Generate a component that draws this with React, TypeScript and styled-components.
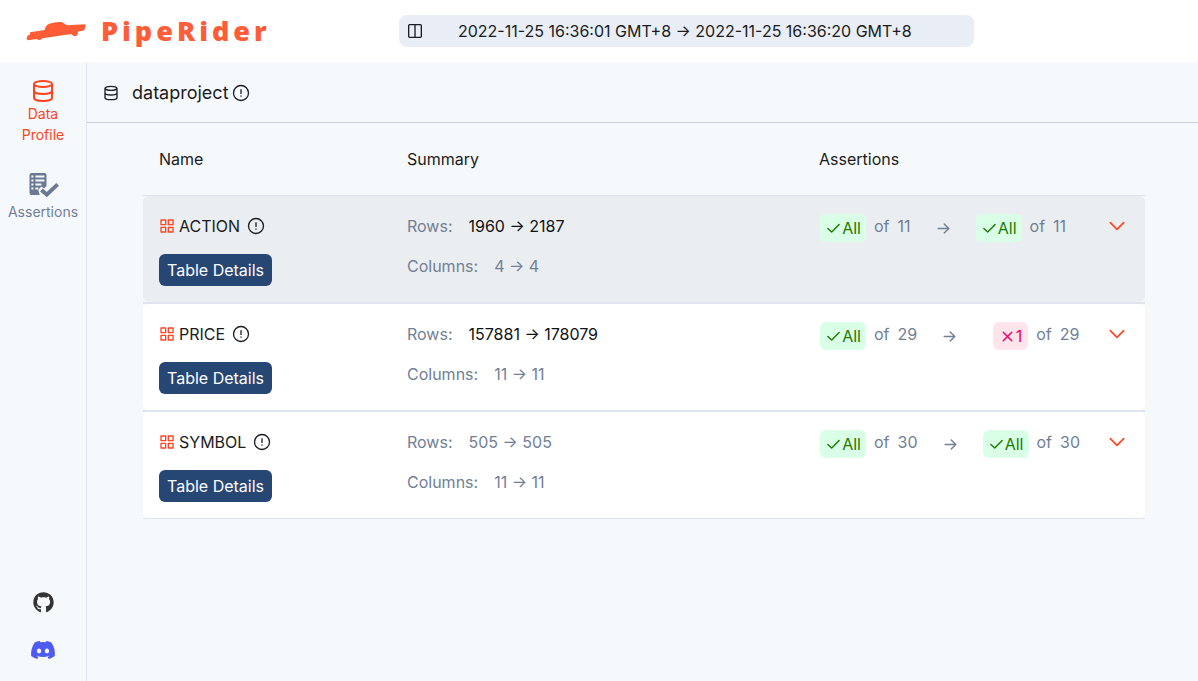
import React from "react";
import styled, { createGlobalStyle } from "styled-components";
import { FaDiscord, FaGithub } from "react-icons/fa";

const color = {
  text: "#1a1c21",
  muted: "#718096",
  brand: "#ff4420",
  line: "#dfe5ee",
  page: "#f6f9fc",
};

const GlobalStyle = createGlobalStyle`
  * { box-sizing: border-box; }
  body {
    margin: 0;
    background: ${color.page};
    color: ${color.text};
    font-family: Inter, "Liberation Sans", sans-serif;
    font-size: 16px;
    line-height: 24px;
    font-weight: 400;
  }
  svg { display: block; flex-shrink: 0; }
`;

const Page = styled.div`
  min-height: 100vh;
  display: flex;
  flex-direction: column;
`;

const TopBar = styled.header`
  display: flex;
  align-items: center;
  height: 63px;
  background: #fff;
  border-bottom: 1px solid #fafafb;
`;

const Brand = styled.a`
  display: flex;
  align-items: center;
  flex: 0 0 33.3%;
  padding-left: 26px;
  gap: 14px;
  color: #ff5c38;
  text-decoration: none;
`;

const BrandName = styled.span`
  font-family: "Noto Sans", sans-serif;
  font-weight: 900;
  font-size: 27px;
  line-height: 32px;
  letter-spacing: 4px;
`;

const Comparison = styled.div`
  display: flex;
  align-items: center;
  flex: 0 1 48%;
  height: 32px;
  padding: 0 8px;
  gap: 35px;
  border-radius: 8px;
  background: #e9edf5;
  white-space: nowrap;
`;

const Body = styled.div`
  flex: 1;
  display: flex;
`;

const Sidebar = styled.nav`
  display: flex;
  flex-direction: column;
  justify-content: space-between;
  width: 87px;
  flex-shrink: 0;
  padding: 16px 0 18px;
  border-right: 1px solid ${color.line};
`;

const NavGroup = styled.div<{ $gap: number }>`
  display: flex;
  flex-direction: column;
  align-items: center;
  gap: ${(p) => p.$gap}px;
`;

const NavItem = styled.a<{ $active?: boolean; $gap?: number }>`
  display: flex;
  flex-direction: column;
  align-items: center;
  gap: ${(p) => p.$gap ?? 0}px;
  color: ${(p) => (p.$active ? color.brand : color.muted)};
  font-size: 14px;
  line-height: 21px;
  text-align: center;
  text-decoration: none;
`;

const SocialLink = styled.a<{ $color: string }>`
  display: flex;
  color: ${(p) => p.$color};
`;

const Main = styled.main`
  flex: 1;
  min-width: 0;
`;

const TitleBar = styled.div`
  display: flex;
  align-items: center;
  height: 60px;
  padding-left: 16px;
  border-bottom: 1px solid #c6cfdf;
`;

const Title = styled.h1`
  margin: 0 3px 0 13px;
  font-size: 18px;
  line-height: 28px;
  font-weight: 400;
`;

const Content = styled.div`
  padding: 0 53px 0 56px;
`;

const Table = styled.table`
  display: block;
  width: 100%;
`;

const TableSection = styled.tbody`
  display: block;
`;

const HeadRow = styled.tr`
  display: grid;
  grid-template-columns: 264fr 412fr 326fr;
  align-items: center;
  height: 72px;
`;

const HeadCell = styled.th`
  padding: 0;
  font-weight: 400;
  text-align: left;
  &:first-child { padding-left: 16px; }
`;

const Row = styled.tr<{ $hovered?: boolean }>`
  display: grid;
  grid-template-columns: 264fr 412fr 326fr;
  border: solid ${color.line};
  border-width: 1px 0;
  td {
    background: ${(p) => (p.$hovered ? "#ebeef0" : "#fff")};
  }
`;

const NameCell = styled.td`
  padding: 16px;
  border-radius: 6px 0 0 6px;
`;

const SummaryCell = styled.td`
  padding: 16px 0;
`;

const AssertionCell = styled.td`
  display: flex;
  align-items: flex-start;
  justify-content: space-between;
  padding: 18px 18px 16px 1px;
  border-radius: 0 6px 6px 0;
`;

const NameLine = styled.div`
  display: flex;
  align-items: center;
  height: 28px;
  margin-bottom: 14px;
  gap: 4px;
`;

const TableName = styled.span`
  margin-right: 3px;
`;

const DetailsButton = styled.button`
  height: 32px;
  padding: 0 8px;
  border: 0;
  border-radius: 6px;
  background: #264674;
  color: #fff;
  font: inherit;
  cursor: pointer;
`;

const Metric = styled.div`
  display: flex;
  gap: 16px;
  line-height: 28px;
  color: ${color.muted};
  & + & { margin-top: 12px; }
`;

const MetricValue = styled.span<{ $changed?: boolean }>`
  color: ${(p) => (p.$changed ? "#101114" : color.muted)};
`;

const Outcomes = styled.div`
  display: flex;
  align-items: center;
  gap: 24px;
  color: ${color.muted};
`;

const Outcome = styled.div`
  display: flex;
  align-items: flex-start;
  gap: 8px;
  height: 28px;
`;

const BadgeSlot = styled.span`
  display: flex;
  justify-content: flex-end;
  min-width: 46px;
`;

const Badge = styled.span<{ $failed?: boolean }>`
  display: flex;
  align-items: center;
  height: 28px;
  padding: 0 ${(p) => (p.$failed ? 6 : 5)}px;
  border-radius: 6px;
  background: ${(p) => (p.$failed ? "#ffe4ec" : "#daffe7")};
  color: ${(p) => (p.$failed ? "#f0005e" : "#1c7a00")};
`;

const ExpandButton = styled.button`
  display: flex;
  align-items: center;
  height: 24px;
  padding: 0;
  border: 0;
  background: none;
  color: ${color.brand};
  cursor: pointer;
`;

type IconProps = { size?: number; stroke?: number; d: string; label?: string };

const LineIcon = ({ size = 16, stroke = 2, d, label }: IconProps) => (
  <svg
    width={size}
    height={size}
    viewBox="0 0 24 24"
    fill="none"
    stroke="currentColor"
    strokeWidth={stroke}
    strokeLinecap="round"
    strokeLinejoin="round"
    role={label ? "img" : undefined}
    aria-label={label}
    aria-hidden={label ? undefined : true}
  >
    <path d={d} />
  </svg>
);

const shapes = {
  database:
    "M3 5a9 3 0 1 0 18 0a9 3 0 1 0 -18 0M21 12c0 1.66-4 3-9 3s-9-1.34-9-3M3 5v14c0 1.66 4 3 9 3s9-1.34 9-3V5",
  columns: "M4 2.5h16a1.5 1.5 0 0 1 1.5 1.5v16a1.5 1.5 0 0 1-1.5 1.5H4a1.5 1.5 0 0 1-1.5-1.5V4a1.5 1.5 0 0 1 1.5-1.5zM12 3v18",
  grid: "M3 3h7v7H3zM14 3h7v7h-7zM14 14h7v7h-7zM3 14h7v7H3z",
  info: "M2 12a10 10 0 1 0 20 0a10 10 0 1 0 -20 0M12 7.5v5M12 16v.2",
  check: "M20 6.5 9.5 17l-5.5-5",
  cross: "M18 6 6 18M6 6l12 12",
  arrow: "M4.5 12h15M13 5.5l6.5 6.5-6.5 6.5",
  chevron: "M4 8l8 8 8-8",
};

const CarLogo = () => (
  <svg width="61" height="20" viewBox="0 0 61 20" fill="currentColor" aria-hidden="true">
    <path d="M1.2 15 4 13.6 4 11.2 18.6 9 C19.6 6 20.6 3.4 24 2.4 L30 1.2 35.8 1 38.2 2.6 40.8 4.2 59 3.2 59.8 5 58 9.4 52.2 10.6 C52 13 51 15.2 49 15.2 C47.4 15.2 46.6 14.4 45.4 13 L16.4 17.2 C15.4 19.2 12.4 19.4 10.8 18 L2.2 19.2 .6 18.2Z" />
  </svg>
);

const AssertionIcon = () => (
  <svg width="32" height="26" viewBox="0 0 32 26" aria-hidden="true">
    <path
      fill="#6b7a92"
      d="M4.5 1h13a2 2 0 0 1 2 2v11l-2.4 2.4-2.8-1.8-3 3.4 1.4 5H4.5a2 2 0 0 1-2-2V3a2 2 0 0 1 2-2z"
    />
    <path
      stroke={color.page}
      strokeWidth="2"
      d="M4.4 4.4h2M8.4 4.4h9M4.4 8.4h2M8.4 8.4h9M4.4 12.4h2M8.4 12.4h6M4.4 16.4h2M8.4 16.4h3"
    />
    <path
      stroke="#6b7a92"
      strokeWidth="4"
      fill="none"
      d="M14.4 18 19.8 22.6 30.6 12.4"
    />
  </svg>
);

type Result = { failed?: number; total: number };
type TableInfo = {
  name: string;
  hovered?: boolean;
  rows: [number, number];
  columns: [number, number];
  results: [Result, Result];
};

const tables: TableInfo[] = [
  { name: "ACTION", hovered: true, rows: [1960, 2187], columns: [4, 4], results: [{ total: 11 }, { total: 11 }] },
  { name: "PRICE", rows: [157881, 178079], columns: [11, 11], results: [{ total: 29 }, { failed: 1, total: 29 }] },
  { name: "SYMBOL", rows: [505, 505], columns: [11, 11], results: [{ total: 30 }, { total: 30 }] },
];

const MetricRow = ({ label, pair }: { label: string; pair: [number, number] }) => (
  <Metric>
    <span>{label}:</span>
    <MetricValue $changed={pair[0] !== pair[1]}>
      {pair[0]} → {pair[1]}
    </MetricValue>
  </Metric>
);

const OutcomeView = ({ failed, total }: Result) => (
  <Outcome>
    <BadgeSlot>
      <Badge $failed={!!failed}>
        <LineIcon size={17} d={failed ? shapes.cross : shapes.check} />
        {failed ?? "All"}
      </Badge>
    </BadgeSlot>
    <span>of</span>
    <span>{total}</span>
  </Outcome>
);

export default function App() {
  return (
    <Page>
      <GlobalStyle />
      <TopBar>
        <Brand href="#">
          <CarLogo />
          <BrandName>PipeRider</BrandName>
        </Brand>
        <Comparison>
          <LineIcon d={shapes.columns} />
          <span>2022-11-25 16:36:01 GMT+8 → 2022-11-25 16:36:20 GMT+8</span>
        </Comparison>
      </TopBar>
      <Body>
        <Sidebar>
          <NavGroup $gap={27}>
            <NavItem href="#profile" $active>
              <LineIcon size={24} d={shapes.database} />
              <span>
                Data
                <br />
                Profile
              </span>
            </NavItem>
            <NavItem href="#assertions" $gap={3}>
              <AssertionIcon />
              <span>Assertions</span>
            </NavItem>
          </NavGroup>
          <NavGroup $gap={24}>
            <SocialLink href="#github" $color="#333" aria-label="GitHub">
              <FaGithub size={21} />
            </SocialLink>
            <SocialLink href="#discord" $color="#4f5bf0" aria-label="Discord">
              <FaDiscord size={26} />
            </SocialLink>
          </NavGroup>
        </Sidebar>
        <Main>
          <TitleBar>
            <LineIcon d={shapes.database} />
            <Title>dataproject</Title>
            <LineIcon size={18} stroke={1.75} d={shapes.info} label="Project details" />
          </TitleBar>
          <Content>
            <Table>
              <TableSection as="thead">
                <HeadRow>
                  <HeadCell scope="col">Name</HeadCell>
                  <HeadCell scope="col">Summary</HeadCell>
                  <HeadCell scope="col">Assertions</HeadCell>
                </HeadRow>
              </TableSection>
              <TableSection>
                {tables.map((t) => (
                  <Row key={t.name} $hovered={t.hovered}>
                    <NameCell>
                      <NameLine>
                        <SocialLink as="span" $color={color.brand}>
                          <LineIcon d={shapes.grid} />
                        </SocialLink>
                        <TableName>{t.name}</TableName>
                        <LineIcon size={18} stroke={1.75} d={shapes.info} label={`About ${t.name}`} />
                      </NameLine>
                      <DetailsButton type="button">Table Details</DetailsButton>
                    </NameCell>
                    <SummaryCell>
                      <MetricRow label="Rows" pair={t.rows} />
                      <MetricRow label="Columns" pair={t.columns} />
                    </SummaryCell>
                    <AssertionCell>
                      <Outcomes>
                        <OutcomeView {...t.results[0]} />
                        <LineIcon size={17} d={shapes.arrow} />
                        <OutcomeView {...t.results[1]} />
                      </Outcomes>
                      <ExpandButton type="button" aria-label={`Expand ${t.name}`}>
                        <LineIcon size={20} d={shapes.chevron} />
                      </ExpandButton>
                    </AssertionCell>
                  </Row>
                ))}
              </TableSection>
            </Table>
          </Content>
        </Main>
      </Body>
    </Page>
  );
}
